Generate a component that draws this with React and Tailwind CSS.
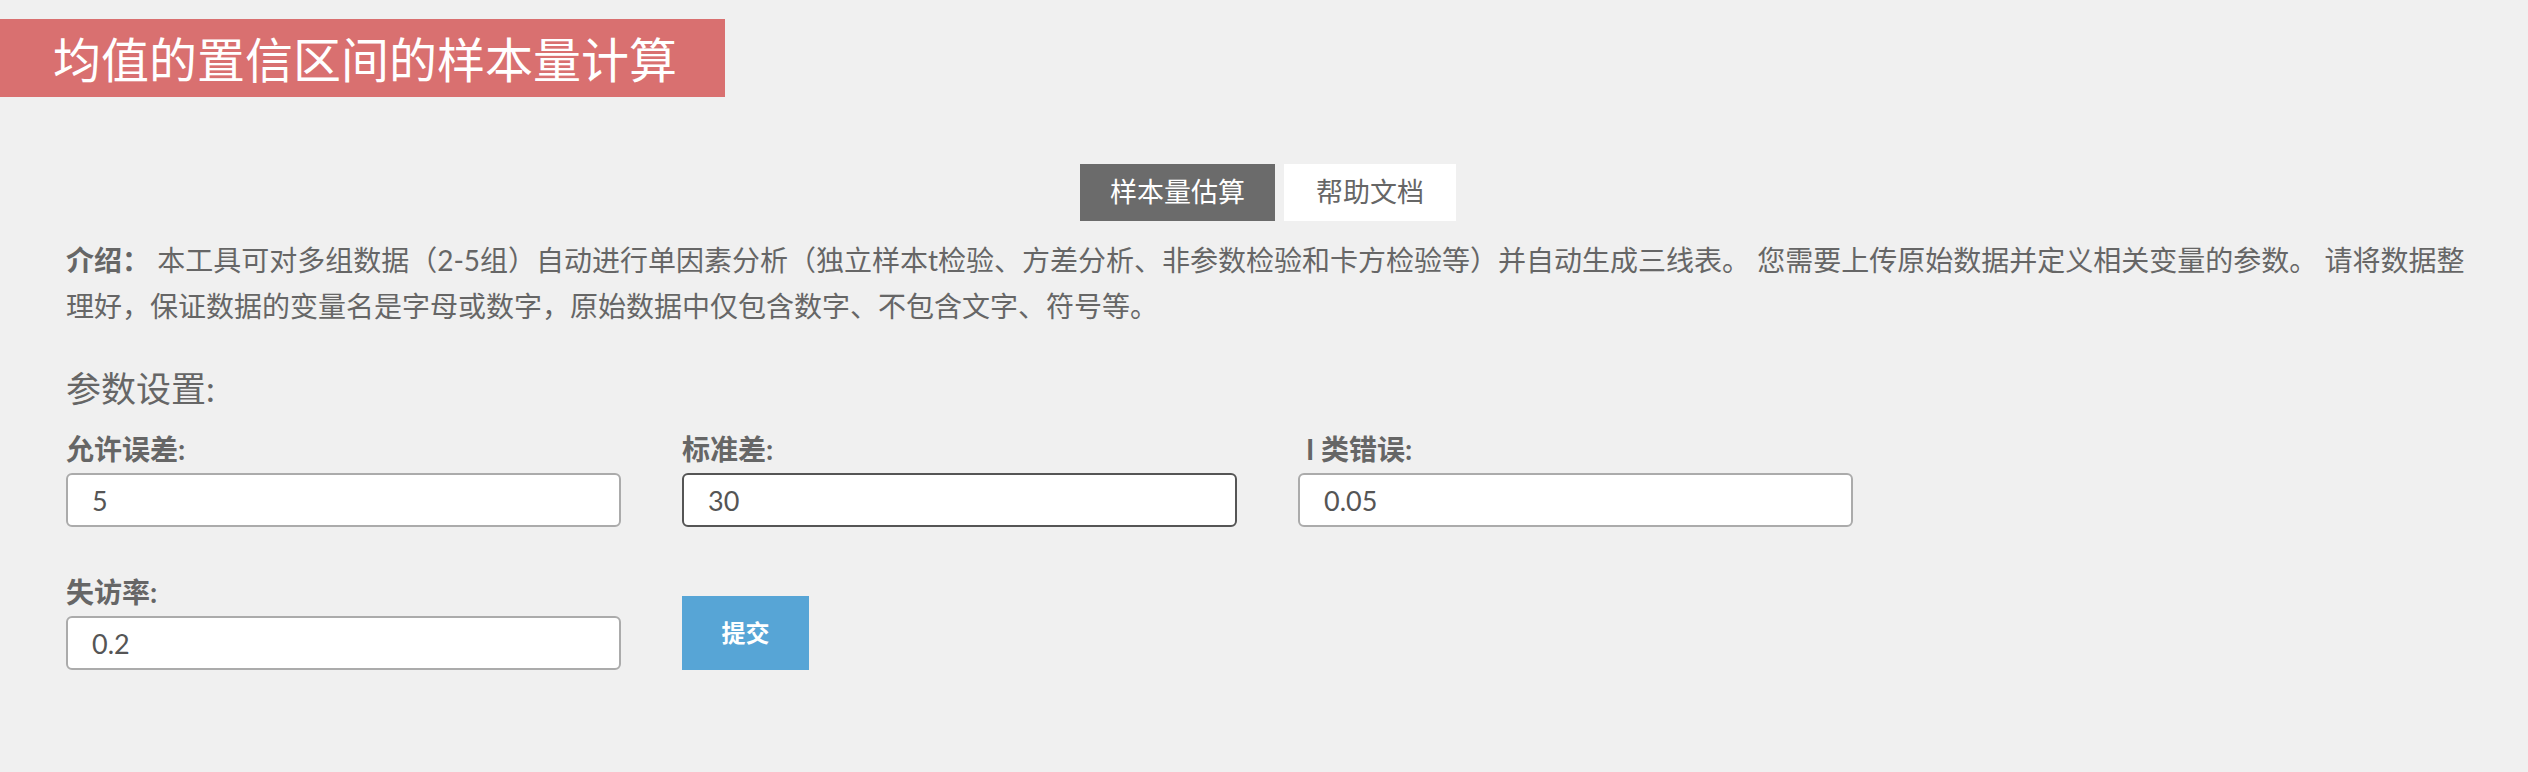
import React from "react";

const FONT = { fontFamily: 'Lato, "Noto Sans CJK SC", sans-serif' };

function Field({ label, value, focused }) {
  return (
    <div className="flex w-[555px] flex-col">
      <div className="h-[36px] text-[28px] leading-[36px] font-bold text-[#666]">{label}</div>
      <input
        readOnly
        value={value}
        className={`mt-[6px] h-[54px] w-full rounded-[6px] bg-white px-[24px] text-[27px] text-[#555] outline-none ${
          focused ? "border-2 border-[#555]" : "border-2 border-[#ababab]"
        }`}
        style={FONT}
      />
    </div>
  );
}

export default function App() {
  return (
    <div className="min-h-[772px] w-full bg-[#f0f0f0] pt-[19px]" style={FONT}>
      <div className="flex h-[78px] w-[725px] items-center bg-[#d97070] pl-[53px] pt-[4px] text-[48px] leading-none text-white">
        均值的置信区间的样本量计算
      </div>

      <div className="mt-[67px] flex justify-center gap-[9px] pl-[8px]">
        <div className="flex h-[57px] items-center bg-[#6b6b6b] px-[30px] text-[27px] text-white">样本量估算</div>
        <div className="flex h-[57px] items-center bg-white px-[32px] text-[27px] text-[#666]">帮助文档</div>
      </div>

      <div className="pl-[66px] pr-[20px]">
        <p className="mt-[16px] text-[28px] leading-[46px] text-[#666]">
          <span className="font-bold">介绍：</span> 本工具可对多组数据（2-5组）自动进行单因素分析（独立样本t检验、方差分析、非参数检验和卡方检验等）并自动生成三线表。 您需要上传原始数据并定义相关变量的参数。 请将数据整
          <br />
          理好，保证数据的变量名是字母或数字，原始数据中仅包含数字、不包含文字、符号等。
        </p>

        <div className="mt-[34px] h-[50px] text-[35px] leading-[50px] text-[#666]">参数设置:</div>

        <div className="mt-[18px] flex gap-[61px]">
          <Field label="允许误差:" value="5" />
          <Field label="标准差:" value="30" focused />
          <Field label={<><span className="ml-[8px]">I</span> 类错误:</>} value="0.05" />
        </div>

        <div className="mt-[47px] flex items-end gap-[61px]">
          <Field label="失访率:" value="0.2" />
          <button className="h-[74px] w-[127px] bg-[#57a5d6] text-[24px] font-bold text-white">提交</button>
        </div>
      </div>
    </div>
  );
}
